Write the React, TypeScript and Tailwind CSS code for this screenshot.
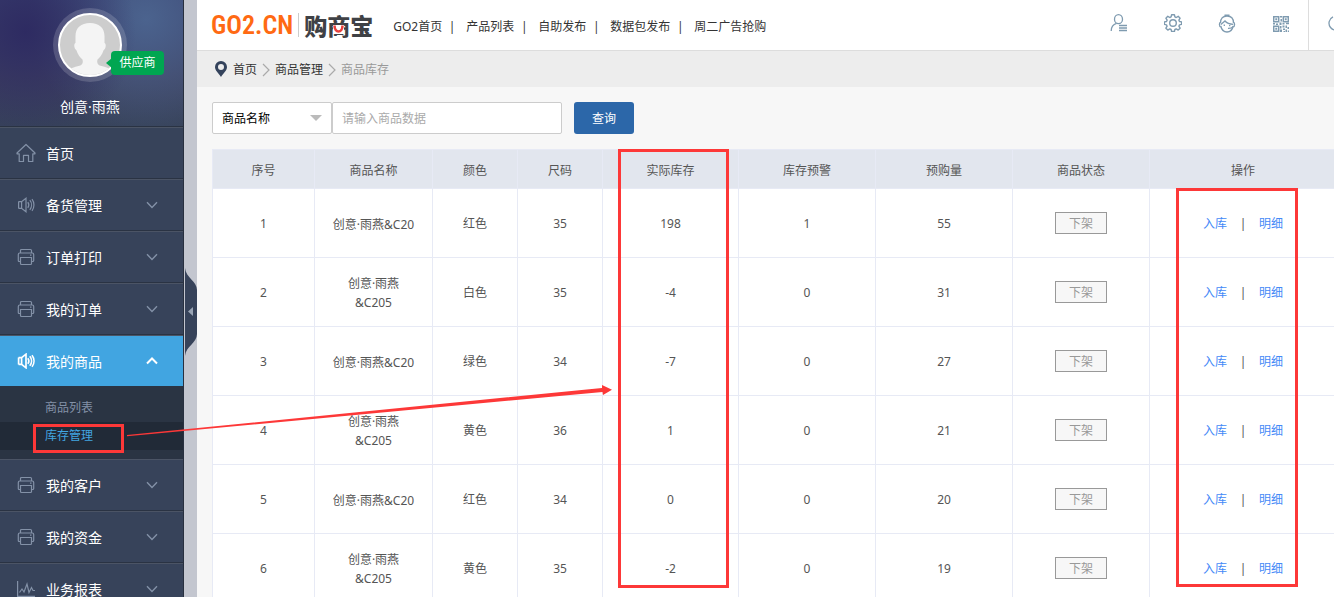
import { useState } from "react";
import type { ReactNode } from "react";

interface MenuEntry {
  label: string;
  icon: ReactNode;
  active?: boolean;
  children?: string[];
}

interface StockRow {
  id: number;
  name: string;
  color: string;
  size: number;
  stock: number;
  warning: number;
  preorder: number;
}

function HomeIcon() {
  return (
    <svg width="20" height="20" viewBox="0 0 20 20" fill="none" stroke="currentColor" strokeWidth="1.2">
      <path d="M1 10 10 1.5 19 10v.8h-2.2v7.7h-4.3v-6.2h-5v6.2H3.2v-7.7H1z" strokeLinejoin="round" />
    </svg>
  );
}

function SpeakerIcon({ bold = false }: { bold?: boolean }) {
  return (
    <svg width="18" height="16" viewBox="0 0 18 16" fill="none" stroke="currentColor" strokeWidth={bold ? 1.7 : 1.2}>
      <path d="M1.6 4.6v6.8M1.6 4.6h3L9 1.2v13.6l-4.4-3.4h-3M4.6 4.6v6.8" />
      <path d="M10.8 5.2c1.2 1.6 1.2 4 0 5.6M12.8 3.2c2.3 2.8 2.3 6.8 0 9.6M15 2.2c2.6 3.4 2.6 8.2 0 11.6" />
    </svg>
  );
}

function PrinterIcon() {
  return (
    <svg width="18" height="18" viewBox="0 0 18 18" fill="none" stroke="currentColor" strokeWidth="1.2">
      <path d="M3.5 5V2.6c0-.7.4-1.1 1.1-1.1h8.8c.7 0 1.1.4 1.1 1.1V5" />
      <path d="M3.5 13.5H2.3c-.6 0-1-.4-1-1V6.4c0-.8.5-1.4 1.4-1.4h12.6c.9 0 1.4.6 1.4 1.4v6.1c0 .6-.4 1-1 1h-1.2" />
      <path d="M3.5 9.500h11v6c0 .7-.4 1-1 1h-9c-.6 0-1-.3-1-1z" />
      <path d="M13 7.2h1.5" />
    </svg>
  );
}

function ChartIcon() {
  return (
    <svg width="20" height="18" viewBox="0 0 20 18" fill="none" stroke="currentColor" strokeWidth="1.2">
      <path d="M1.6 1v15.4H19" />
      <path d="M3.5 12.5 6 9l2 3 3-8 2 8.500 2.500-5 1.500 3h2" />
    </svg>
  );
}

function Chevron({ up = false }: { up?: boolean }) {
  return (
    <svg width="12" height="8" viewBox="0 0 12 8" fill="none" stroke="currentColor" strokeWidth={up ? 2 : 1.4}>
      <path d={up ? "M1 6.5 6 1.5l5 5" : "M1 1.2 6 6.4l5-5.2"} />
    </svg>
  );
}

function CrumbArrow() {
  return (
    <svg className="mx-[5px]" width="8" height="14" viewBox="0 0 8 14" fill="none" stroke="#aaa" strokeWidth="1.2">
      <path d="m1 1 6 6-6 6" />
    </svg>
  );
}

function Avatar() {
  return (
    <svg width="74" height="74" viewBox="0 0 74 74">
      <defs>
        <clipPath id="face">
          <circle cx="37" cy="37" r="30" />
        </clipPath>
      </defs>
      <circle cx="37" cy="37" r="37" fill="#fff" fillOpacity=".16" />
      <circle cx="37" cy="37" r="31" fill="#cdcdcd" stroke="#fff" strokeWidth="2" />
      <path
        clipPath="url(#face)"
        fill="#f4f4f4"
        d="M37 15c-9 0-14.500 5-14.500 13v7c-2 .5-1.500 6 .8 7 1.500 5 4.200 7.500 6.200 9.500 1 4-.5 5.500-4 6.500-4 1-7.500 2-11 4v8h45v-8c-3.500-2-7-3-11-4-3.500-1-5-2.500-4-6.500 2-2 4.700-4.500 6.200-9.500 2.300-1 2.800-6.500.8-7v-7c0-8-5.500-13-14.500-13z"
      />
    </svg>
  );
}

const menu: MenuEntry[] = [
  { label: "首页", icon: <HomeIcon /> },
  { label: "备货管理", icon: <SpeakerIcon />, children: [] },
  { label: "订单打印", icon: <PrinterIcon />, children: [] },
  { label: "我的订单", icon: <PrinterIcon />, children: [] },
  { label: "我的商品", icon: <SpeakerIcon bold />, active: true, children: ["商品列表", "库存管理"] },
  { label: "我的客户", icon: <PrinterIcon />, children: [] },
  { label: "我的资金", icon: <PrinterIcon />, children: [] },
  { label: "业务报表", icon: <ChartIcon />, children: [] },
];

const topLinks = ["GO2首页", "产品列表", "自助发布", "数据包发布", "周二广告抢购"];

const columns = ["序号", "商品名称", "颜色", "尺码", "实际库存", "库存预警", "预购量", "商品状态", "操作"];

const rows: StockRow[] = [
  { id: 1, name: "创意·雨燕&C20", color: "红色", size: 35, stock: 198, warning: 1, preorder: 55 },
  { id: 2, name: "创意·雨燕&C205", color: "白色", size: 35, stock: -4, warning: 0, preorder: 31 },
  { id: 3, name: "创意·雨燕&C20", color: "绿色", size: 34, stock: -7, warning: 0, preorder: 27 },
  { id: 4, name: "创意·雨燕&C205", color: "黄色", size: 36, stock: 1, warning: 0, preorder: 21 },
  { id: 5, name: "创意·雨燕&C20", color: "红色", size: 34, stock: 0, warning: 0, preorder: 20 },
  { id: 6, name: "创意·雨燕&C205", color: "黄色", size: 35, stock: -2, warning: 0, preorder: 19 },
];

function Sidebar() {
  return (
    <aside className="w-[184px] shrink-0 border-r border-[#28303f] bg-[#37435a] text-white">
      <div className="flex h-[127px] flex-col items-center border-b border-[#2a3343] bg-[radial-gradient(circle_at_14%_25%,#2e2b62_0%,#2e2b6200_60%),radial-gradient(circle_at_80%_15%,#4b638e_0%,#4b638e00_65%),linear-gradient(#3a4270,#3f4260_60%,#37435a)] pt-2 pr-[3px]">
        <div className="relative">
          <Avatar />
          <span className="absolute top-[43px] left-[58px] flex h-6 w-[53px] items-center justify-center rounded bg-[#00a651] text-xs">
            <svg className="absolute top-[7px] -left-[5px]" width="6" height="10" viewBox="0 0 6 10" fill="#00a651">
              <path d="M6 0v10L0 5z" />
            </svg>
            供应商
          </span>
        </div>
        <p className="mt-[15px] text-sm leading-5">创意·雨燕</p>
      </div>
      <ul className="text-sm">
        {menu.map((entry) => (
          <li key={entry.label}>
            <a
              href="#"
              className={`flex items-center border-t pr-[25px] pl-4 ${
                entry.active
                  ? "h-[51px] border-[#4b5465] bg-[#41a5e1]"
                  : "h-[52px] border-t-[#4b5465] border-b border-b-[#2a3343]"
              }`}
            >
              <span className={`flex w-5 justify-center ${entry.active ? "text-white" : "text-[#8391a7]"}`}>{entry.icon}</span>
              <span className="ml-[10px] pt-px">{entry.label}</span>
              {entry.children && (
                <span className={`ml-auto ${entry.active ? "text-white" : "text-[#8391a7]"}`}>
                  <Chevron up={entry.active} />
                </span>
              )}
            </a>
            {entry.active && (
              <ul className="border-b border-[#2a3343] bg-[#2a3443] py-2 text-xs">
                {entry.children?.map((child) => (
                  <li key={child}>
                    <a
                      href="#"
                      className={`flex h-7 items-center pl-[45px] ${
                        child === "库存管理" ? "bg-[#212a37] text-[#41a5e1]" : "text-[#8391a7]"
                      }`}
                    >
                      {child}
                    </a>
                  </li>
                ))}
              </ul>
            )}
          </li>
        ))}
      </ul>
    </aside>
  );
}

function Logo() {
  return (
    <a href="#" className="flex items-center" aria-label="GO2.CN 购商宝">
      <span className="font-['Roboto_Condensed','Liberation_Sans_Narrow',sans-serif] text-[26px] leading-8 font-semibold text-[#ff6a13]">
        GO2.CN
      </span>
      <span className="mx-[5px] h-6 w-px bg-[#ccc]" />
      <span className="relative font-['Noto_Sans_CJK_SC',sans-serif] text-[23px] leading-8 font-black text-[#3f4145]">
        购商宝
        <svg className="absolute top-[16px] left-[29px]" width="11" height="9" viewBox="0 0 11 9">
          <path d="M0 0h11v9H0z" fill="#fff" />
          <path d="M1.500.5c0 8 8 8 8 0" fill="none" stroke="#e8413c" strokeWidth="2.600" />
        </svg>
      </span>
    </a>
  );
}

function TopIcons() {
  return (
    <div className="ml-auto flex h-full shrink-0 text-[#7f9bb0]">
      <button className="flex w-[54px] items-center justify-center pb-1" aria-label="账户">
        <svg width="18" height="18" viewBox="0 0 18 18" fill="none" stroke="currentColor" strokeWidth="1.3">
          <ellipse cx="8.5" cy="5.2" rx="4" ry="4.5" />
          <path d="M6.5 9.4C3 10.5 1.2 13 1.2 17M9 11.500h8M9 14h8M9 16.500h8" />
        </svg>
      </button>
      <button className="flex w-[54px] items-center justify-center pb-1" aria-label="设置">
        <svg width="18" height="18" viewBox="0 0 18 18" fill="none" stroke="currentColor" strokeWidth="1.4">
          <path
            strokeLinejoin="round"
            d="M7.600.7h2.800l.5 2.200 1.300.6 2-1.200 1.900 1.900-1.200 2 .6 1.300 2.100.4v2.500l-2.100.5-.6 1.300 1.200 2-1.900 1.900-2-1.200-1.300.6-.5 2H7.600l-.5-2-1.300-.6-2 1.200-1.900-1.900 1.200-2-.6-1.300-2.100-.5V7.900l2.100-.4.600-1.300-1.200-2 1.900-1.900 2 1.200 1.300-.6z"
          />
          <circle cx="9" cy="9" r="3.3" />
        </svg>
      </button>
      <button className="flex w-[54px] items-center justify-center pb-1" aria-label="客服">
        <svg width="18" height="19" viewBox="0 0 18 19" fill="none" stroke="currentColor" strokeWidth="1.3">
          <path d="M2.5 9C2.500 4.500 5 2 9 2s6.500 2.500 6.500 7M6.500 1.200h5" />
          <path d="M2.600 8.300C1 8.500 1 12.500 2.800 12.800M15.400 8.300c1.600.2 1.600 4.200-.2 4.500" />
          <path d="M2.800 12c.8 4 3.200 6 6.200 6s5.400-2 6.200-6" />
          <path d="M2.800 10.500 7 7c2 2.300 5 3.200 8.200 3.400M15 12.500c-1 1.700-2.500 2-5 1.900" />
          <path d="M6.300 10.600v1.300M11.700 11v1.300" />
        </svg>
      </button>
      <button className="flex w-[54px] items-center justify-center pb-0.5" aria-label="二维码">
        <svg width="16" height="16" viewBox="0 0 16 16" fill="none" stroke="currentColor" strokeWidth="1.5">
          <path d="M.7.700h5v5h-5zM10.300.700h5v5h-5zM.7 10.300h5v5h-5z" />
          <path
            fill="currentColor"
            stroke="none"
            d="M2.300 2.300h1.900v1.900H2.300zM11.800 2.300h1.900v1.900h-1.900zM2.300 11.800h1.900v1.900H2.300zM7 0h2v1.500H7zM7.500 3h1.500v2.500H7.500zM0 7h2v1.500H0zM3 7.500h2V9H3zM6.500 6.500h2V9h-2zM9.500 7h2v1.500h-2zM13 6.800h3v1.500h-3zM7 10h1.500v2.500H7zM9.500 9.500h2v2h-2zM12.500 9.500h1.500v2.500h-1.500zM14.500 11H16v2h-1.500zM7 13.500h2V16H7zM10 12.500h2V14h-2zM12.500 13.500h1.500V16h-1.500zM10.500 15h1.500v1h-1.500zM14.800 14.500H16V16h-1.200z"
          />
        </svg>
      </button>
      <button className="w-[26px] overflow-hidden border-l border-[#ddd] pb-1 pl-[19px]" aria-label="退出">
        <svg width="16" height="16" viewBox="0 0 16 16" fill="none" stroke="currentColor" strokeWidth="1.3">
          <path d="M5 1.800a7 7 0 1 0 6 0M8 .5V7" />
        </svg>
      </button>
    </div>
  );
}

function StockTable() {
  return (
    <table className="mt-[15px] w-full min-w-[1125px] table-fixed border-collapse bg-white text-center text-[#555]">
      <colgroup>
        <col className="w-[102px]" />
        <col className="w-[118px]" />
        <col className="w-[85px]" />
        <col className="w-[85px]" />
        <col className="w-[136px]" />
        <col className="w-[137px]" />
        <col className="w-[137px]" />
        <col className="w-[137px]" />
        <col />
      </colgroup>
      <thead>
        <tr className="h-[39px] bg-[#e2e6ee]">
          {columns.map((column) => (
            <th key={column} className="border border-[#e7eaf5] pt-[3px] font-normal">
              {column}
            </th>
          ))}
        </tr>
      </thead>
      <tbody>
        {rows.map((row) => (
          <tr key={row.id} className="h-[69px] *:border *:border-[#e7eaf5] *:pt-[2px]">
            <td>{row.id}</td>
            <td className="px-4 leading-[19px]">{row.name}</td>
            <td>{row.color}</td>
            <td>{row.size}</td>
            <td>{row.stock}</td>
            <td>{row.warning}</td>
            <td>{row.preorder}</td>
            <td>
              <button className="mb-[2px] h-[22px] w-[52px] border border-[#999] bg-[#f7f7f7] pt-[2px] align-top text-[#999]">
                下架
              </button>
            </td>
            <td>
              <div className="flex items-center justify-center text-[#4489f7]">
                <a href="#">入库</a>
                <span className="w-8 text-center text-[#555]">|</span>
                <a href="#">明细</a>
              </div>
            </td>
          </tr>
        ))}
      </tbody>
    </table>
  );
}

// red frames and the arrow that lie over the page
function Marks() {
  return (
    <svg className="pointer-events-none absolute top-0 left-0" width="1334" height="597" viewBox="0 0 1334 597">
      <g fill="none" stroke="#fd3838" strokeWidth="3">
        <rect x="34.5" y="425.5" width="88" height="26" />
        <rect x="619.5" y="150.5" width="108" height="436" />
        <rect x="1177.5" y="189.5" width="119" height="396" />
      </g>
      <path fill="#fd3838" d="M127 435 602 388 602 385 612 389.800 603 395 602.500 392 127 436.200z" />
    </svg>
  );
}

function App() {
  const [field, setField] = useState("商品名称");
  const [keyword, setKeyword] = useState("");

  return (
    <div className="relative flex h-screen overflow-hidden bg-[#f7f7f7] font-['Noto_Sans','Noto_Sans_CJK_SC',sans-serif] text-xs">
      <Sidebar />
      <div className="relative w-[13px] shrink-0 bg-[#c3c6cf]">
        <button className="absolute top-[268px] right-0" aria-label="收起菜单">
          <svg width="12" height="88" viewBox="0 0 12 88">
            <path d="M0 0c1 10 12 13 12 22v44c0 9-11 12-12 22z" fill="#37435a" />
            <path d="M8 39v9l-5-4.500z" fill="#9aa5b5" />
          </svg>
        </button>
      </div>
      <div className="min-w-0 flex-1 overflow-hidden">
        <header className="flex h-[51px] items-center border-b border-[#ddd] bg-white pl-[14px]">
          <Logo />
          <nav className="ml-5 flex items-center pt-1 text-[#333]">
            {topLinks.map((link, i) => (
              <div key={link} className="flex">
                {i > 0 && <span className="w-6 pr-1 text-center">|</span>}
                <a href="#">{link}</a>
              </div>
            ))}
          </nav>
          <TopIcons />
        </header>
        <div className="flex h-9 items-center bg-[#ededed] pt-[2px] pl-[18px] text-[#333]">
          <svg className="mr-[6px] mb-[2px]" width="12" height="16" viewBox="0 0 12 16">
            <path d="M6 0a6 6 0 0 0-6 6c0 3.500 3.500 6 6 10 2.500-4 6-6.500 6-10a6 6 0 0 0-6-6zm0 3a3 3 0 1 1 0 6 3 3 0 0 1 0-6z" fill="#34435c" />
          </svg>
          <a href="#">首页</a>
          <CrumbArrow />
          <a href="#">商品管理</a>
          <CrumbArrow />
          <span className="text-[#999]">商品库存</span>
        </div>
        <main className="pt-[15px] pl-[15px]">
          <form className="flex h-8" onSubmit={(e) => e.preventDefault()}>
            <div className="relative">
              <select
                aria-label="查询字段"
                className="h-8 w-[120px] appearance-none rounded-xs border border-[#ccc] bg-white pt-[2px] pl-[9px] text-black"
                value={field}
                onChange={(e) => setField(e.target.value)}
              >
                <option>商品名称</option>
                <option>颜色</option>
                <option>尺码</option>
              </select>
              <svg className="pointer-events-none absolute top-[13px] right-[10px]" width="12" height="6" viewBox="0 0 12 6" fill="#bbb">
                <path d="M0 0h12L6 6z" />
              </svg>
            </div>
            <input
              aria-label="商品数据"
              className="w-[230px] rounded-xs border border-[#ccc] bg-white px-[9px] pt-[2px] placeholder:text-[#aaa]"
              placeholder="请输入商品数据"
              value={keyword}
              onChange={(e) => setKeyword(e.target.value)}
            />
            <button className="ml-3 w-[60px] rounded-[3px] bg-[#2c67a9] pt-[2px] text-white">查询</button>
          </form>
          <StockTable />
        </main>
      </div>
      <Marks />
    </div>
  );
}

export default App;
